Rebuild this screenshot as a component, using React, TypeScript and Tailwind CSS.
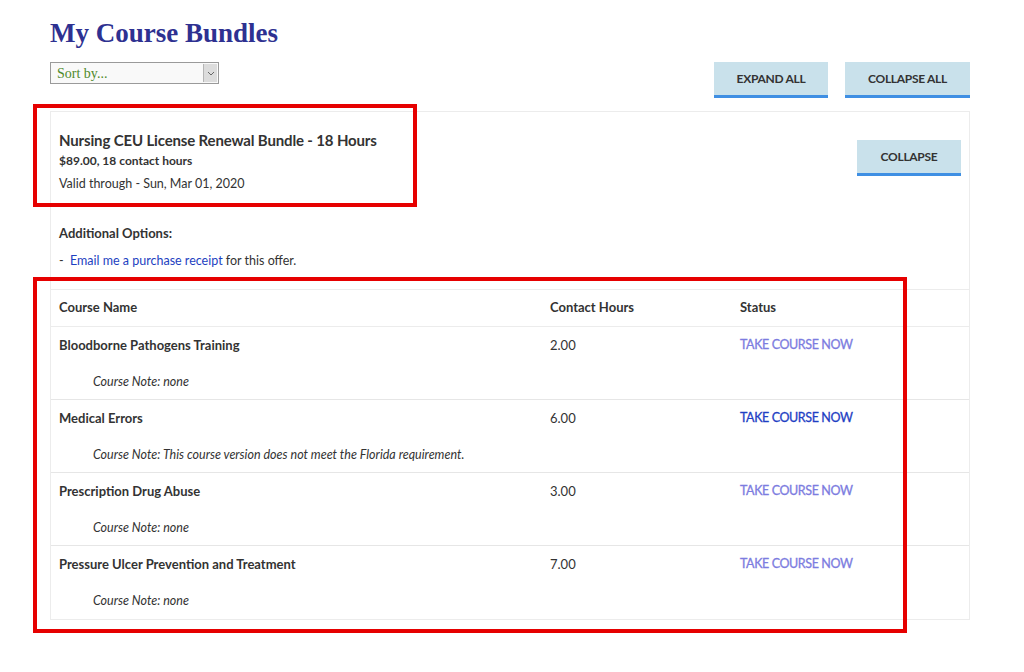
const SANS = "font-['Lato','Liberation_Sans',sans-serif]";

type Course = {
  name: string;
  hours: string;
  note: string;
  visited: boolean;
};

const COURSES: Course[] = [
  { name: "Bloodborne Pathogens Training", hours: "2.00", note: "none", visited: true },
  {
    name: "Medical Errors",
    hours: "6.00",
    note: "This course version does not meet the Florida requirement.",
    visited: false,
  },
  { name: "Prescription Drug Abuse", hours: "3.00", note: "none", visited: true },
  { name: "Pressure Ulcer Prevention and Treatment", hours: "7.00", note: "none", visited: true },
];

function BlueButton({ label, className }: { label: string; className: string }) {
  return (
    <button
      className={`h-[36px] bg-[#c9e1eb] border-b-[3px] border-[#3f8fe3] text-[12px] font-bold text-[#333] tracking-[-0.3px] ${className}`}
    >
      {label}
    </button>
  );
}

export default function App() {
  return (
    <div className={`relative min-h-[672px] w-[1024px] bg-white ${SANS} text-[#333]`}>
      <div className="w-[920px] ml-[50px] pt-[16px]">
        <h1 className="font-['Liberation_Serif',serif] font-bold text-[27px] leading-[34px] text-[#2e3191]">
          My Course Bundles
        </h1>

        <div className="flex items-start justify-between mt-[12px]">
          <div className="w-[169px] h-[22px] border border-[#9a9a9a] bg-[#f9f9f9] flex items-center justify-between">
            <span className="pl-[6px] font-['Liberation_Serif',serif] text-[14px] text-[#4f8a2c]">Sort by...</span>
            <span className="w-[14px] h-[18px] mr-[1px] bg-[#dcdcdc] border-l border-[#b5b5b5] flex items-center justify-center">
              <svg width="8" height="5" viewBox="0 0 8 5" fill="none">
                <path d="M1 1l3 3 3-3" stroke="#666" strokeWidth="1" />
              </svg>
            </span>
          </div>
          <div className="flex gap-[17px]">
            <BlueButton label="EXPAND ALL" className="w-[114px]" />
            <BlueButton label="COLLAPSE ALL" className="w-[125px]" />
          </div>
        </div>

        <div className="mt-[13px] border border-[#ececec]">
          <div className="flex justify-between pl-[8px] pr-[8px] pt-[17px]">
            <div>
              <div className="text-[15px] font-bold leading-[22px] tracking-[-0.15px]">
                Nursing CEU License Renewal Bundle - 18 Hours
              </div>
              <div className="text-[12px] font-bold leading-[20px]">$89.00, 18 contact hours</div>
              <div className="text-[12.5px] leading-[20px] mt-[3px]">Valid through - Sun, Mar 01, 2020</div>
            </div>
            <BlueButton label="COLLAPSE" className="w-[104px] mt-[11px]" />
          </div>

          <div className="pl-[8px] pt-[29px] pb-[18px]">
            <div className="text-[13px] font-bold leading-[20px]">Additional Options:</div>
            <div className="text-[12.5px] leading-[20px] mt-[8px]">
              -&nbsp; <a className="text-[#1d3fc1]">Email me a purchase receipt</a> for this offer.
            </div>
          </div>

          <div className="border-t border-[#ececec]">
            <div className="flex h-[37px] items-center pl-[8px] text-[13px] font-bold border-b border-[#ececec]">
              <div className="w-[491px]">Course Name</div>
              <div className="w-[190px]">Contact Hours</div>
              <div>Status</div>
            </div>
            {COURSES.map((c, i) => (
              <div
                key={c.name}
                className={`h-[73px] pl-[8px] pt-[8px] ${i < COURSES.length - 1 ? "border-b border-[#e6e6e6]" : ""}`}
              >
                <div className="flex text-[13px] leading-[20px]">
                  <div className="w-[491px] font-bold">{c.name}</div>
                  <div className="w-[190px]">{c.hours}</div>
                  <a
                    className={`text-[12.5px] tracking-[-0.4px] [-webkit-text-stroke:0.3px_currentColor] ${
                      c.visited ? "text-[#7c7ce0]" : "text-[#1f3fc4]"
                    }`}
                  >
                    TAKE COURSE NOW
                  </a>
                </div>
                <div className="pl-[34px] mt-[17px] text-[12.5px] italic leading-[20px]">Course Note: {c.note}</div>
              </div>
            ))}
          </div>
        </div>
      </div>

      <div className="absolute left-[33px] top-[104px] w-[384px] h-[103px] border-[4px] border-[#e60000] pointer-events-none" />
      <div className="absolute left-[33px] top-[277px] w-[874px] h-[356px] border-[4px] border-[#e60000] pointer-events-none" />
    </div>
  );
}
